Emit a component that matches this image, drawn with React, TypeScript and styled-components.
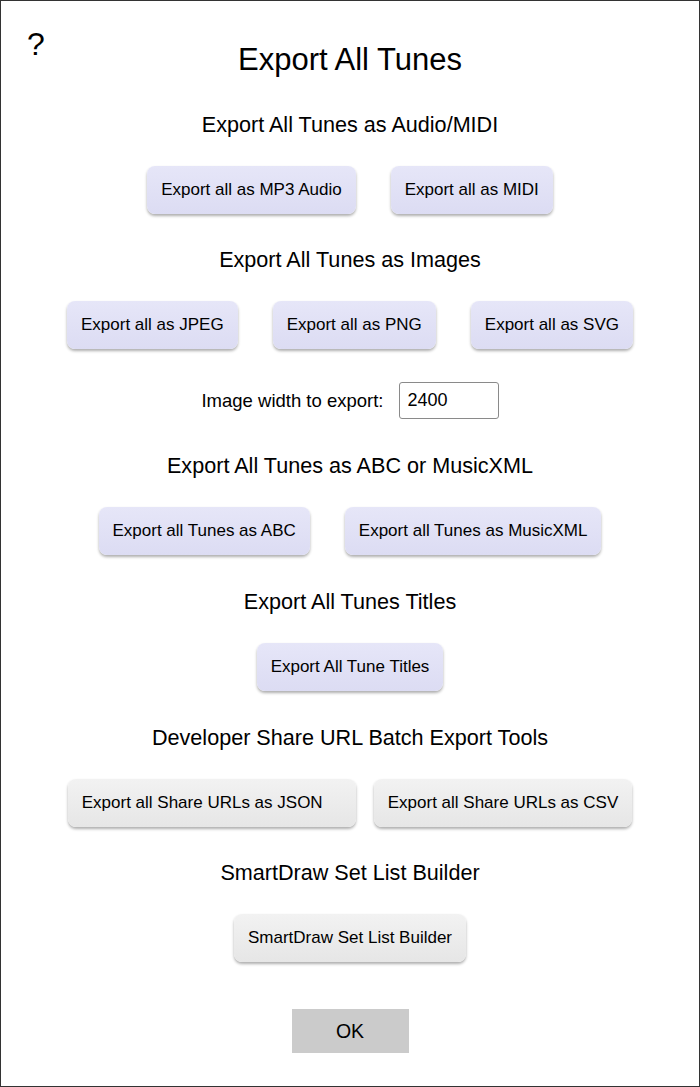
import React from "react";
import styled, { createGlobalStyle } from "styled-components";

const Global = createGlobalStyle`
  html, body { margin: 0; padding: 0; background: #fff; }
  body { font-family: "Liberation Sans", Arial, sans-serif; color: #000; }
  * { box-sizing: border-box; }
`;

const Frame = styled.div`
  position: relative;
  width: 700px;
  height: 1087px;
  border: 1px solid #333;
  display: flex;
  flex-direction: column;
  align-items: center;
  padding-top: 42px;
`;

const Help = styled.div`
  position: absolute;
  left: 26px;
  top: 27px;
  font-size: 32px;
  line-height: 32px;
  cursor: pointer;
`;

const Title = styled.h1`
  margin: 0;
  font-size: 31px;
  font-weight: normal;
  line-height: 34px;
`;

const Section = styled.section<{ $top: number }>`
  display: flex;
  flex-direction: column;
  align-items: center;
  margin-top: ${(p) => p.$top}px;
`;

const Heading = styled.h2`
  margin: 0 0 29px;
  font-size: 21.6px;
  font-weight: normal;
  line-height: 24px;
`;

const Row = styled.div<{ $gap?: number }>`
  display: flex;
  justify-content: center;
  gap: ${(p) => p.$gap ?? 35}px;
`;

const Button = styled.button<{ $gray?: boolean; $width?: number }>`
  font-family: "Liberation Sans", Arial, sans-serif;
  font-size: 17px;
  line-height: 20px;
  padding: 14px 14px;
  border: none;
  border-radius: 8px;
  color: #000;
  text-align: left;
  width: ${(p) => (p.$width ? `${p.$width}px` : "auto")};
  background: ${(p) =>
    p.$gray
      ? "linear-gradient(#f2f2f2, #e6e6e6)"
      : "linear-gradient(#e6e6f8, #dcdcf3)"};
  box-shadow: 0 2px 3px rgba(0, 0, 0, 0.32);
  cursor: pointer;
`;

const WidthRow = styled.div`
  display: flex;
  align-items: center;
  gap: 15px;
  margin-top: 33px;
  font-size: 18.5px;
  line-height: 22px;
`;

const WidthInput = styled.input`
  width: 100px;
  height: 37px;
  padding: 0 8px;
  font-family: "Liberation Sans", Arial, sans-serif;
  font-size: 18px;
  border: 1px solid #8a8a8a;
  border-radius: 3px;
  color: #000;
`;

const OkButton = styled.button`
  margin-top: 47px;
  width: 117px;
  height: 44px;
  border: none;
  border-radius: 0;
  background: #cbcbcb;
  font-family: "Liberation Sans", Arial, sans-serif;
  font-size: 19.5px;
  color: #000;
  cursor: pointer;
`;

export default function App() {
  return (
    <>
      <Global />
      <Frame>
        <Help>?</Help>
        <Title>Export All Tunes</Title>

        <Section $top={36}>
          <Heading>Export All Tunes as Audio/MIDI</Heading>
          <Row>
            <Button>Export all as MP3 Audio</Button>
            <Button>Export all as MIDI</Button>
          </Row>
        </Section>

        <Section $top={34}>
          <Heading>Export All Tunes as Images</Heading>
          <Row>
            <Button>Export all as JPEG</Button>
            <Button>Export all as PNG</Button>
            <Button>Export all as SVG</Button>
          </Row>
        </Section>

        <WidthRow>
          <span>Image width to export:</span>
          <WidthInput defaultValue="2400" />
        </WidthRow>

        <Section $top={35}>
          <Heading>Export All Tunes as ABC or MusicXML</Heading>
          <Row>
            <Button>Export all Tunes as ABC</Button>
            <Button>Export all Tunes as MusicXML</Button>
          </Row>
        </Section>

        <Section $top={35}>
          <Heading>Export All Tunes Titles</Heading>
          <Row>
            <Button>Export All Tune Titles</Button>
          </Row>
        </Section>

        <Section $top={35}>
          <Heading>Developer Share URL Batch Export Tools</Heading>
          <Row $gap={18}>
            <Button $gray $width={288}>
              Export all Share URLs as JSON
            </Button>
            <Button $gray>Export all Share URLs as CSV</Button>
          </Row>
        </Section>

        <Section $top={34}>
          <Heading>SmartDraw Set List Builder</Heading>
          <Row>
            <Button $gray>SmartDraw Set List Builder</Button>
          </Row>
        </Section>

        <OkButton>OK</OkButton>
      </Frame>
    </>
  );
}
